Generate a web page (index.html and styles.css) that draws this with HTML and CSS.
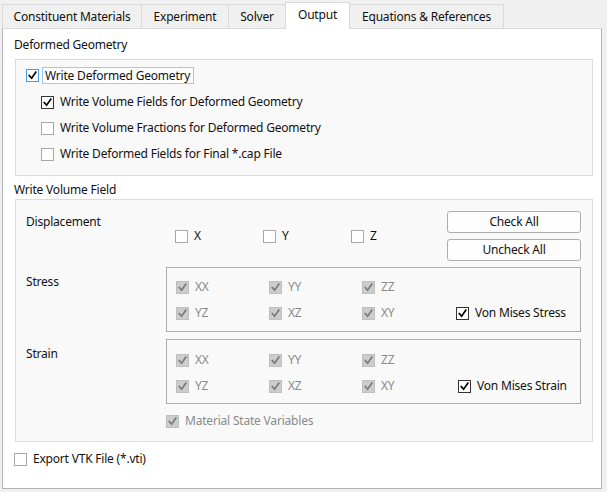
FILE: index.html
```html
<!DOCTYPE html>
<html>
<head>
<meta charset="utf-8">
<link rel="stylesheet" href="styles.css">
</head>
<body>
<div class="window">
  <div class="tabs">
    <div class="tab t1">Constituent Materials</div>
    <div class="tab t2">Experiment</div>
    <div class="tab t3">Solver</div>
    <div class="tab t4 active">Output</div>
    <div class="tab t5">Equations &amp; References</div>
  </div>
  <div class="panel">
    <div class="title t-first">Deformed Geometry</div>
    <div class="group g1">
      <div class="row row-first">
        <span class="cb checked hover"><svg viewBox="0 0 11 11"><path d="M2.3 5.6 L4.6 8.2 L8.8 2.2"/></svg></span>
        <span class="focus">Write Deformed Geometry</span>
      </div>
      <div class="row sub">
        <span class="cb checked"><svg viewBox="0 0 11 11"><path d="M2.3 5.6 L4.6 8.2 L8.8 2.2"/></svg></span>
        <span class="lbl">Write Volume Fields for Deformed Geometry</span>
      </div>
      <div class="row sub">
        <span class="cb"></span>
        <span class="lbl">Write Volume Fractions for Deformed Geometry</span>
      </div>
      <div class="row sub">
        <span class="cb"></span>
        <span class="lbl">Write Deformed Fields for Final *.cap File</span>
      </div>
    </div>

    <div class="title t-second">Write Volume Field</div>
    <div class="group g2">
      <div class="disp">
        <div class="side disp-label">Displacement</div>
        <div class="xyz">
          <div class="item"><span class="cb"></span><span class="lbl">X</span></div>
          <div class="item"><span class="cb"></span><span class="lbl">Y</span></div>
          <div class="item"><span class="cb"></span><span class="lbl">Z</span></div>
        </div>
        <div class="buttons">
          <div class="btn">Check All</div>
          <div class="btn">Uncheck All</div>
        </div>
      </div>

      <div class="section stress">
        <div class="side sec-label">Stress</div>
        <div class="box">
          <div class="item"><span class="cb dis"><svg viewBox="0 0 11 11"><path d="M2.3 5.6 L4.6 8.2 L8.8 2.2"/></svg></span><span class="lbl dim">XX</span></div>
          <div class="item"><span class="cb dis"><svg viewBox="0 0 11 11"><path d="M2.3 5.6 L4.6 8.2 L8.8 2.2"/></svg></span><span class="lbl dim">YY</span></div>
          <div class="item"><span class="cb dis"><svg viewBox="0 0 11 11"><path d="M2.3 5.6 L4.6 8.2 L8.8 2.2"/></svg></span><span class="lbl dim">ZZ</span></div>
          <div class="item"></div>
          <div class="item"><span class="cb dis"><svg viewBox="0 0 11 11"><path d="M2.3 5.6 L4.6 8.2 L8.8 2.2"/></svg></span><span class="lbl dim">YZ</span></div>
          <div class="item"><span class="cb dis"><svg viewBox="0 0 11 11"><path d="M2.3 5.6 L4.6 8.2 L8.8 2.2"/></svg></span><span class="lbl dim">XZ</span></div>
          <div class="item"><span class="cb dis"><svg viewBox="0 0 11 11"><path d="M2.3 5.6 L4.6 8.2 L8.8 2.2"/></svg></span><span class="lbl dim">XY</span></div>
          <div class="item"><span class="cb checked"><svg viewBox="0 0 11 11"><path d="M2.3 5.6 L4.6 8.2 L8.8 2.2"/></svg></span><span class="lbl">Von Mises Stress</span></div>
        </div>
      </div>

      <div class="section strain">
        <div class="side sec-label">Strain</div>
        <div class="box">
          <div class="item"><span class="cb dis"><svg viewBox="0 0 11 11"><path d="M2.3 5.6 L4.6 8.2 L8.8 2.2"/></svg></span><span class="lbl dim">XX</span></div>
          <div class="item"><span class="cb dis"><svg viewBox="0 0 11 11"><path d="M2.3 5.6 L4.6 8.2 L8.8 2.2"/></svg></span><span class="lbl dim">YY</span></div>
          <div class="item"><span class="cb dis"><svg viewBox="0 0 11 11"><path d="M2.3 5.6 L4.6 8.2 L8.8 2.2"/></svg></span><span class="lbl dim">ZZ</span></div>
          <div class="item"></div>
          <div class="item"><span class="cb dis"><svg viewBox="0 0 11 11"><path d="M2.3 5.6 L4.6 8.2 L8.8 2.2"/></svg></span><span class="lbl dim">YZ</span></div>
          <div class="item"><span class="cb dis"><svg viewBox="0 0 11 11"><path d="M2.3 5.6 L4.6 8.2 L8.8 2.2"/></svg></span><span class="lbl dim">XZ</span></div>
          <div class="item"><span class="cb dis"><svg viewBox="0 0 11 11"><path d="M2.3 5.6 L4.6 8.2 L8.8 2.2"/></svg></span><span class="lbl dim">XY</span></div>
          <div class="item vm2"><span class="cb checked"><svg viewBox="0 0 11 11"><path d="M2.3 5.6 L4.6 8.2 L8.8 2.2"/></svg></span><span class="lbl">Von Mises Strain</span></div>
        </div>
      </div>

      <div class="row msv">
        <span class="cb dis"><svg viewBox="0 0 11 11"><path d="M2.3 5.6 L4.6 8.2 L8.8 2.2"/></svg></span>
        <span class="lbl dim">Material State Variables</span>
      </div>
    </div>

    <div class="row vtk">
      <span class="cb"></span>
      <span class="lbl">Export VTK File (*.vti)</span>
    </div>
  </div>
</div>
</body>
</html>
```

FILE: styles.css
```css
* { box-sizing: border-box; }

html, body {
  margin: 0;
  padding: 0;
}

body {
  width: 607px;
  height: 492px;
  overflow: hidden;
  background: #f0f0f0;
  font-family: "Noto Sans", "Open Sans", sans-serif;
  font-size: 12px;
  line-height: 16px;
  letter-spacing: -0.2px;
  color: #111;
}

.window {
  padding-left: 2px;
}

.tabs {
  display: flex;
  align-items: flex-end;
  height: 28px;
}

.tab {
  height: 24px;
  border: 1px solid #d9d9d9;
  border-bottom: none;
  background: #f0f0f0;
  display: flex;
  align-items: center;
  justify-content: center;
  margin-left: -1px;
  white-space: nowrap;
}

.t1 { width: 140px; margin-left: 0; }
.t2 { width: 88px; }
.t3 { width: 58px; }
.t4 { width: 65px; }
.t5 { width: 155px; }

.tab.active {
  height: 27px;
  margin-bottom: -1px;
  background: #fff;
  position: relative;
  z-index: 1;
  padding-bottom: 2px;
}

.panel {
  width: 600px;
  height: 461px;
  background: #fff;
  border: 1px solid #b4b4b4;
  border-top-color: #d9d9d9;
  padding: 8px 0 0 11px;
}

.title {
  height: 16px;
}

.t-second {
  margin-top: 6px;
}

.group {
  width: 578px;
  margin-left: 1px;
  background: #f9f9f9;
  border: 1px solid #dcdcdc;
}

.g1 {
  margin-top: 6px;
  padding: 2px 0 8px 10px;
}

.g2 {
  margin-top: 1px;
  padding: 11px 11px 7px 10px;
}

.row {
  display: flex;
  align-items: center;
  height: 26px;
}

.row-first {
  height: 27px;
}

.sub {
  padding-left: 15px;
}

.cb {
  width: 13px;
  height: 13px;
  flex: none;
  border: 1px solid #a9a9a9;
  background: #fff;
  display: flex;
  align-items: center;
  justify-content: center;
}

.cb svg {
  width: 11px;
  height: 11px;
  display: block;
}

.cb svg path {
  fill: none;
  stroke: #000;
  stroke-width: 1.7;
  stroke-linecap: square;
  stroke-linejoin: miter;
}

.cb.checked {
  border-color: #333;
}

.cb.hover {
  border-color: #4a9de0;
}

.cb.dis {
  background: #cccccc;
  border-color: #bfbfbf;
}

.cb.dis svg path {
  stroke: #7a7a7a;
}

.lbl {
  margin-left: 6px;
  white-space: nowrap;
}

.dim {
  color: #8a8a8a;
}

.focus {
  margin-left: 3px;
  height: 17px;
  border: 1px solid #9dcbef;
  background: #fdfeff;
  padding: 0 3px 0 2px;
  display: flex;
  align-items: center;
  white-space: nowrap;
}

.disp {
  display: flex;
  height: 50px;
}

.side {
  width: 140px;
  flex: none;
}

.disp-label {
  margin-top: 3px;
}

.xyz {
  width: 281px;
  display: flex;
  align-items: center;
  height: 26px;
  margin-top: 12px;
  padding-left: 9px;
}

.xyz .item {
  width: 88px;
  display: flex;
  align-items: center;
}

.buttons {
  width: 134px;
  display: flex;
  flex-direction: column;
  gap: 6px;
}

.btn {
  height: 22px;
  border: 1px solid #adadad;
  border-radius: 3px;
  background: #fdfdfd;
  display: flex;
  align-items: center;
  justify-content: center;
}

.section {
  display: flex;
}

.stress { margin-top: 6px; }
.strain { margin-top: 7px; }

.sec-label {
  padding-top: 7px;
}

.box {
  width: 415px;
  height: 65px;
  border: 1px solid #acacac;
  display: grid;
  grid-template-columns: 93px 93px 94px auto;
  grid-auto-rows: 26px;
  align-items: center;
  padding: 6px 0 0 9px;
}

.strain .box {
  padding-top: 7px;
}

.box .item {
  display: flex;
  align-items: center;
}

.vm2 {
  padding-left: 2px;
}

.msv {
  margin-top: 4px;
  padding-left: 140px;
}

.vtk {
  margin-top: 4px;
}
```
